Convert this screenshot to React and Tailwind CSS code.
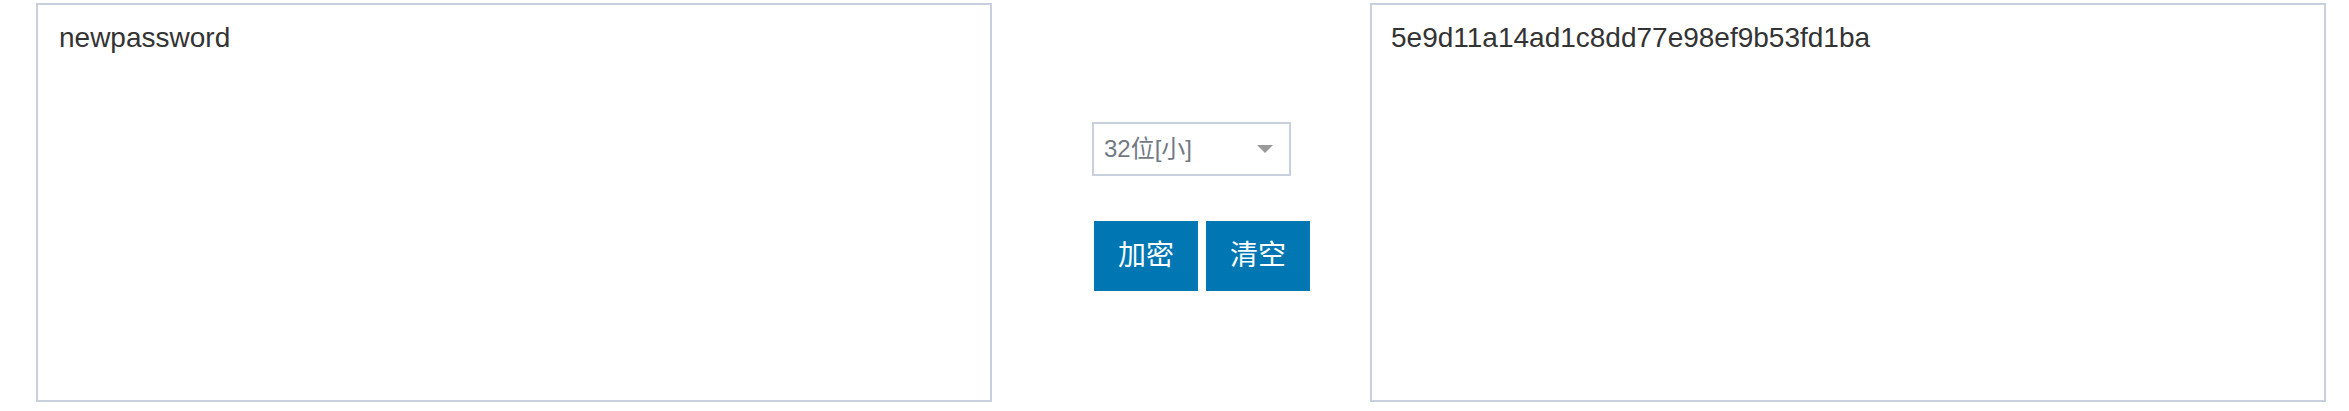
import React from "react";

export default function App() {
  const font = { fontFamily: '"Liberation Sans", "Noto Sans CJK SC", Arial, sans-serif' };
  return (
    <div className="w-[2349px] h-[411px] bg-white flex items-start pl-[36px] pt-[3px]" style={font}>
      <div className="w-[956px] h-[399px] border-2 border-[#c8d0dc] pl-[21px] pt-[17px] text-[28px] text-[#333333] leading-[1.15]">
        newpassword
      </div>
      <div className="w-[378px] flex flex-col pl-[100px] pt-[119px]">
        <div className="w-[199px] h-[54px] border-2 border-[#c8d0dc] flex items-center justify-between pl-[10px] pr-[16px]">
          <span className="text-[24px] text-[#727985] leading-none">32位[小]</span>
          <span className="w-0 h-0 border-l-[8px] border-r-[8px] border-t-[8px] border-l-transparent border-r-transparent border-t-[#9a9a9a]"></span>
        </div>
        <div className="flex gap-[8px] mt-[45px] ml-[2px]">
          <div className="w-[104px] h-[70px] bg-[#0077b3] text-white text-[28px] flex items-center justify-center">加密</div>
          <div className="w-[104px] h-[70px] bg-[#0077b3] text-white text-[28px] flex items-center justify-center">清空</div>
        </div>
      </div>
      <div className="w-[956px] h-[399px] border-2 border-[#c8d0dc] pl-[19px] pt-[17px] text-[28px] text-[#333333] leading-[1.15]">
        5e9d11a14ad1c8dd77e98ef9b53fd1ba
      </div>
    </div>
  );
}
